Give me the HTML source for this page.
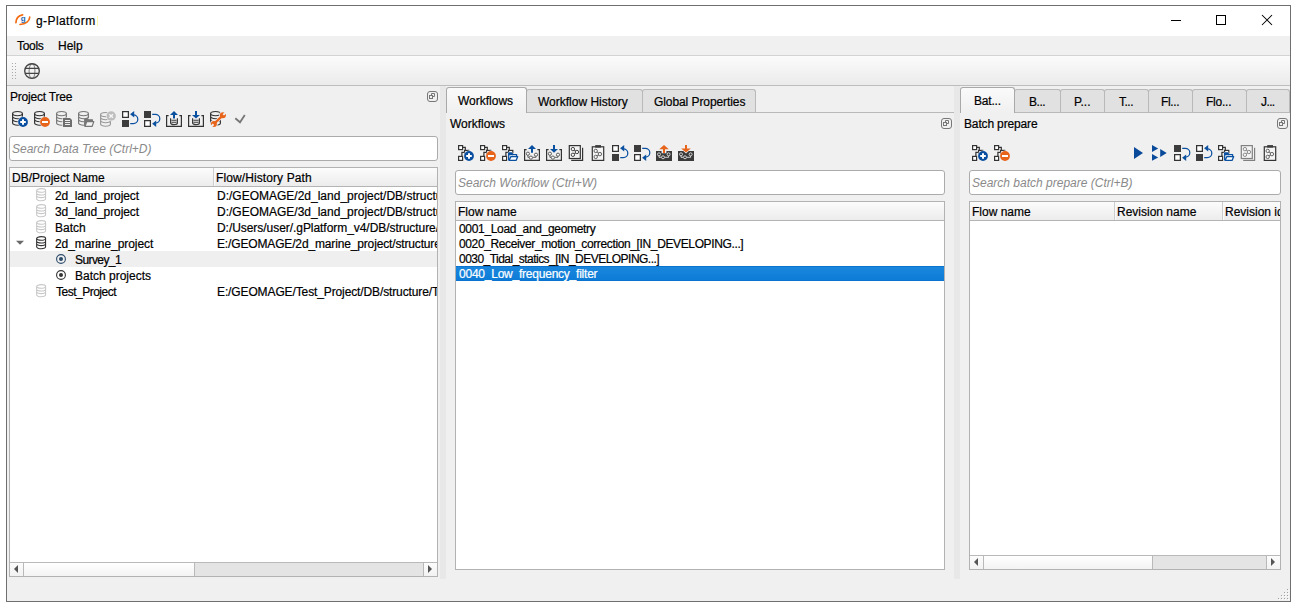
<!DOCTYPE html>
<html><head><meta charset="utf-8">
<style>
*{margin:0;padding:0;box-sizing:border-box}
html,body{width:1297px;height:609px;overflow:hidden;background:#fff;font-family:"Liberation Sans",sans-serif;font-size:12px;color:#000}
.a{position:absolute}
.t{position:absolute;white-space:nowrap;line-height:14px;height:14px;-webkit-text-stroke:0.2px currentColor}
.ph{position:absolute;white-space:nowrap;font-style:italic;color:#8a8a8a;line-height:14px}
.srch{position:absolute;background:#fff;border:1px solid #ababab;border-radius:3px}
.box{position:absolute;background:#fff;border:1px solid #b2b2b2}
.hdr{position:absolute;background:linear-gradient(#fcfcfc,#ececec);border-bottom:1px solid #b4b4b4}
.tab{position:absolute;background:#e1e1e1;border:1px solid #b9b9b9;border-bottom:none;border-radius:3px 3px 0 0}
.tabsel{position:absolute;background:linear-gradient(#fafafa,#f0f0f0);border:1px solid #a9a9a9;border-bottom:none;border-radius:3px 3px 0 0}
.flt{position:absolute;width:12px;height:12px;border:1px solid #7a7a7a;border-radius:3px}
.spl{position:absolute;background:#e8e8e8}
</style></head><body>
<!-- window border -->
<div class="a" style="left:6px;top:5px;width:1285px;height:597px;border:1px solid #707070;background:#f0f0f0"></div>
<!-- title bar -->
<div class="a" style="left:7px;top:6px;width:1283px;height:30px;background:#fff"></div>
<div class="t" style="left:36px;top:14px;letter-spacing:0.42px">g-Platform</div>
<div class="a" style="left:97px;top:16px;width:1px;height:10px;background:#fff6a8"></div>
<!-- menu -->
<div class="a" style="left:7px;top:36px;width:1283px;height:19px;background:#f0f0f0"></div>
<div class="a" style="left:7px;top:55px;width:1283px;height:1px;background:#d3d3d3"></div>
<div class="t" style="left:17px;top:39px;letter-spacing:-0.3px">Tools</div>
<div class="t" style="left:58px;top:39px">Help</div>
<!-- toolbar -->
<div class="a" style="left:7px;top:56px;width:1283px;height:29px;background:linear-gradient(#fbfbfb,#ebebeb)"></div>
<div class="a" style="left:7px;top:85px;width:1283px;height:1px;background:#bdbdbd"></div>

<!-- LEFT DOCK -->
<div class="t" style="left:10px;top:90px;letter-spacing:-0.2px">Project Tree</div>
<div class="srch" style="left:9px;top:136px;width:429px;height:25px"></div>
<div class="ph" style="left:12px;top:142px">Search Data Tree (Ctrl+D)</div>
<div class="box" style="left:9px;top:167px;width:429px;height:410px"></div>
<div class="hdr" style="left:10px;top:168px;width:427px;height:19px"></div>
<div class="a" style="left:213px;top:168px;width:1px;height:18px;background:#cdcdcd;box-shadow:1px 0 0 #fafafa"></div>
<div class="t" style="left:12px;top:171px">DB/Project Name</div>
<div class="t" style="left:216px;top:171px;letter-spacing:0.1px">Flow/History Path</div>
<div class="a" style="left:10px;top:251px;width:427px;height:16px;background:#efefef"></div>
<div class="t" style="left:55px;top:189px;letter-spacing:-0.1px">2d_land_project</div>
<div class="t" style="left:55px;top:205px;letter-spacing:-0.1px">3d_land_project</div>
<div class="t" style="left:55px;top:221px">Batch</div>
<div class="t" style="left:55px;top:237px;letter-spacing:-0.07px">2d_marine_project</div>
<div class="t" style="left:75px;top:253px;letter-spacing:-0.58px">Survey_1</div>
<div class="t" style="left:75px;top:269px">Batch projects</div>
<div class="t" style="left:56px;top:285px;letter-spacing:-0.5px">Test_Project</div>
<div class="a" style="left:217px;top:186px;width:220px;height:120px;overflow:hidden">
  <div class="t" style="left:0;top:3px">D:/GEOMAGE/2d_land_project/DB/structure/</div>
  <div class="t" style="left:0;top:19px">D:/GEOMAGE/3d_land_project/DB/structure/</div>
  <div class="t" style="left:0;top:35px;letter-spacing:-0.05px">D:/Users/user/.gPlatform_v4/DB/structure/</div>
  <div class="t" style="left:0;top:51px;letter-spacing:-0.15px">E:/GEOMAGE/2d_marine_project/structure/</div>
  <div class="t" style="left:0;top:99px;letter-spacing:-0.12px">E:/GEOMAGE/Test_Project/DB/structure/T</div>
</div>
<!-- left scrollbar -->
<div class="a" style="left:10px;top:562px;width:427px;height:14px;background:#e4e4e4;border-top:1px solid #b9b9b9"></div>
<div class="a" style="left:10px;top:563px;width:14px;height:13px;background:linear-gradient(#fcfcfc,#f2f2f2);border-right:1px solid #b9b9b9"></div>
<div class="a" style="left:24px;top:563px;width:171px;height:13px;background:linear-gradient(#ffffff,#f3f3f3);border-right:1px solid #b9b9b9"></div>
<div class="a" style="left:423px;top:563px;width:14px;height:13px;background:linear-gradient(#fcfcfc,#f2f2f2);border-left:1px solid #b9b9b9"></div>
<svg class="a" style="left:10px;top:562px" width="14" height="14"><path d="M8,3L4,7L8,11Z" fill="#555"/></svg>
<svg class="a" style="left:423px;top:562px" width="14" height="14"><path d="M5,3L9,7L5,11Z" fill="#555"/></svg>


<!-- splitter -->
<div class="spl" style="left:440px;top:86px;width:6px;height:493px"></div>

<!-- CENTER -->
<div class="a" style="left:526px;top:112px;width:428px;height:1px;background:#b9b9b9"></div>
<div class="tab" style="left:526px;top:89px;width:117px;height:23px"></div>
<div class="tab" style="left:642px;top:89px;width:114px;height:23px"></div>
<div class="tabsel" style="left:446px;top:87px;width:81px;height:26px"></div>
<div class="t" style="left:458px;top:94px">Workflows</div>
<div class="t" style="left:538px;top:95px">Workflow History</div>
<div class="t" style="left:654px;top:95px;letter-spacing:-0.08px">Global Properties</div>
<div class="t" style="left:450px;top:117px">Workflows</div>
<div class="srch" style="left:455px;top:170px;width:490px;height:25px"></div>
<div class="ph" style="left:458px;top:176px">Search Workflow (Ctrl+W)</div>
<div class="box" style="left:455px;top:201px;width:490px;height:369px"></div>
<div class="hdr" style="left:456px;top:202px;width:488px;height:19px"></div>
<div class="t" style="left:458px;top:205px">Flow name</div>
<div class="a" style="left:456px;top:266px;width:488px;height:15px;background:linear-gradient(#1a86dd,#0d7cd7);border-top:1px solid #0a72cf;border-bottom:1px solid #0a72cf"></div>
<div class="t" style="left:459px;top:222px;letter-spacing:-0.32px">0001_Load_and_geometry</div>
<div class="t" style="left:459px;top:237px;letter-spacing:-0.37px">0020_Receiver_motion_correction_[IN_DEVELOPING...]</div>
<div class="t" style="left:459px;top:252px;letter-spacing:-0.53px">0030_Tidal_statics_[IN_DEVELOPING...]</div>
<div class="t" style="left:459px;top:267px;color:#fff;letter-spacing:-0.23px">0040_Low_frequency_filter</div>

<!-- splitter 2 -->
<div class="spl" style="left:954px;top:86px;width:6px;height:493px"></div>

<!-- RIGHT -->
<div class="a" style="left:1014px;top:112px;width:276px;height:1px;background:#b9b9b9"></div>
<div class="tab" style="left:1014px;top:89px;width:47px;height:23px"></div>
<div class="tab" style="left:1060px;top:89px;width:45px;height:23px"></div>
<div class="tab" style="left:1104px;top:89px;width:45px;height:23px"></div>
<div class="tab" style="left:1148px;top:89px;width:45px;height:23px"></div>
<div class="tab" style="left:1192px;top:89px;width:55px;height:23px"></div>
<div class="tab" style="left:1246px;top:89px;width:44px;height:23px"></div>
<div class="tabsel" style="left:960px;top:87px;width:55px;height:26px"></div>
<div class="t" style="left:974px;top:94px;letter-spacing:-0.2px">Bat...</div>
<div class="t" style="left:1029px;top:95px;letter-spacing:-0.45px">B...</div>
<div class="t" style="left:1074px;top:95px">P...</div>
<div class="t" style="left:1119px;top:95px;letter-spacing:-0.5px">T...</div>
<div class="t" style="left:1161px;top:95px;letter-spacing:-0.38px">Fl...</div>
<div class="t" style="left:1206px;top:95px;letter-spacing:-0.24px">Flo...</div>
<div class="t" style="left:1261px;top:95px;letter-spacing:-0.6px">J...</div>
<div class="t" style="left:964px;top:117px;letter-spacing:-0.15px">Batch prepare</div>
<div class="srch" style="left:969px;top:170px;width:312px;height:25px"></div>
<div class="ph" style="left:972px;top:176px">Search batch prepare (Ctrl+B)</div>
<div class="box" style="left:969px;top:201px;width:312px;height:369px"></div>
<div class="hdr" style="left:970px;top:202px;width:310px;height:19px"></div>
<div class="a" style="left:1114px;top:202px;width:1px;height:18px;background:#cdcdcd;box-shadow:1px 0 0 #fafafa"></div>
<div class="a" style="left:1222px;top:202px;width:1px;height:18px;background:#cdcdcd;box-shadow:1px 0 0 #fafafa"></div>
<div class="t" style="left:972px;top:205px">Flow name</div>
<div class="a" style="left:1117px;top:202px;width:103px;height:18px;overflow:hidden"><div class="t" style="left:0;top:3px">Revision name</div></div>
<div class="a" style="left:1225px;top:202px;width:55px;height:18px;overflow:hidden"><div class="t" style="left:0;top:3px">Revision id</div></div>
<div class="a" style="left:970px;top:555px;width:310px;height:14px;background:#e4e4e4;border-top:1px solid #b9b9b9"></div>
<div class="a" style="left:970px;top:556px;width:14px;height:13px;background:linear-gradient(#fcfcfc,#f2f2f2);border-right:1px solid #b9b9b9"></div>
<div class="a" style="left:984px;top:556px;width:169px;height:13px;background:linear-gradient(#ffffff,#f3f3f3);border-right:1px solid #b9b9b9"></div>
<div class="a" style="left:1266px;top:556px;width:14px;height:13px;background:linear-gradient(#fcfcfc,#f2f2f2);border-left:1px solid #b9b9b9"></div>
<svg class="a" style="left:970px;top:555px" width="14" height="14"><path d="M8,3L4,7L8,11Z" fill="#555"/></svg>
<svg class="a" style="left:1266px;top:555px" width="14" height="14"><path d="M5,3L9,7L5,11Z" fill="#555"/></svg>
<svg class="a" style="left:1160px;top:8px" width="120" height="24"><path d="M11,12.5H21" stroke="#000" stroke-width="1"/><rect x="56.5" y="7.5" width="9" height="9" fill="none" stroke="#000" stroke-width="1"/><path d="M102,7L112,17M112,7L102,17" stroke="#000" stroke-width="1.05"/></svg>
<svg class="a" style="left:1278px;top:589px" width="12" height="12"><rect x="10" y="1" width="1" height="1" fill="#fff"/><rect x="9" y="0" width="1" height="1" fill="#a0a0a0"/><rect x="7" y="4" width="1" height="1" fill="#fff"/><rect x="6" y="3" width="1" height="1" fill="#a0a0a0"/><rect x="10" y="4" width="1" height="1" fill="#fff"/><rect x="9" y="3" width="1" height="1" fill="#a0a0a0"/><rect x="4" y="7" width="1" height="1" fill="#fff"/><rect x="3" y="6" width="1" height="1" fill="#a0a0a0"/><rect x="7" y="7" width="1" height="1" fill="#fff"/><rect x="6" y="6" width="1" height="1" fill="#a0a0a0"/><rect x="10" y="7" width="1" height="1" fill="#fff"/><rect x="9" y="6" width="1" height="1" fill="#a0a0a0"/><rect x="1" y="10" width="1" height="1" fill="#fff"/><rect x="0" y="9" width="1" height="1" fill="#a0a0a0"/><rect x="4" y="10" width="1" height="1" fill="#fff"/><rect x="3" y="9" width="1" height="1" fill="#a0a0a0"/><rect x="7" y="10" width="1" height="1" fill="#fff"/><rect x="6" y="9" width="1" height="1" fill="#a0a0a0"/><rect x="10" y="10" width="1" height="1" fill="#fff"/><rect x="9" y="9" width="1" height="1" fill="#a0a0a0"/></svg>

<svg width="0" height="0" style="position:absolute">
<defs>
 <g id="db">
  <ellipse cx="5.5" cy="2.6" rx="4.9" ry="2.1" fill="none"/>
  <path d="M0.6,2.6V12.4M10.4,2.6V12.4M0.6,5.6A4.9,2.1 0 0 0 10.4,5.6M0.6,8.6A4.9,2.1 0 0 0 10.4,8.6M0.6,12.1A4.9,2.1 0 0 0 10.4,12.1" fill="none"/>
 </g>
 <g id="flow">
  <path d="M4.6,2.3H7.3V5.4M6.6,7.3H3.9V11.4" fill="none"/>
  <rect x="0.6" y="0.6" width="4" height="4" fill="#fff"/>
  <rect x="6.6" y="5.4" width="4.2" height="4.2" fill="#fff"/>
  <rect x="0.6" y="11.4" width="4" height="4" fill="#fff"/>
 </g>
 <g id="plusc"><circle cx="11" cy="11" r="5.4" fill="#f0f0f0"/><circle cx="11" cy="11" r="4.9" fill="#0a4ea0"/><path d="M8.2,11H13.8M11,8.2V13.8" stroke="#fff" stroke-width="2"/></g>
 <g id="minusc"><circle cx="11" cy="11" r="5.4" fill="#f0f0f0"/><circle cx="11" cy="11" r="4.9" fill="#e8641b"/><path d="M8,11H14" stroke="#fff" stroke-width="2"/></g>
 <g id="folderb" stroke="#0a50a0" stroke-width="1.3" stroke-linejoin="round">
  <path d="M5.8,16.2V7.3H10L11,8.5H15.4V11H16.4L15,16.2Z" fill="#f0f0f0" stroke="none"/>
  <path d="M6.7,15.3V8.2H9.6L10.6,9.6H14.6V11.4" fill="#fff"/>
  <path d="M6.7,8.2H9.6L10.6,9.6H6.7Z" fill="#0a50a0"/>
  <path d="M7.1,15.3L8.9,11.6H15.7L14.2,15.3Z" fill="#fff"/>
 </g>
 <g id="swapup">
  <rect x="0" y="0" width="7" height="7" fill="#333"/><rect x="1.25" y="1.25" width="4.5" height="4.5" fill="#fff"/>
  <rect x="0" y="9" width="7" height="7" fill="#3c3c3c"/>
  <path d="M11.3,3.9A4.5,4.35 0 0 1 11.3,12.6H8.2" fill="none" stroke="#0a50a0" stroke-width="1.25"/>
  <path d="M8.1,3.2L12.2,0.1V6.6Z" fill="#0a50a0"/>
 </g>
 <g id="swapdn">
  <rect x="0" y="0" width="7" height="7" fill="#3c3c3c"/>
  <rect x="0" y="9" width="7" height="7" fill="#333"/><rect x="1.25" y="10.25" width="4.5" height="4.5" fill="#fff"/>
  <path d="M8.2,3.4H11.3A4.5,4.35 0 0 1 11.3,12.1" fill="none" stroke="#0a50a0" stroke-width="1.25"/>
  <path d="M8.1,12.8L12.2,9.4V15.9Z" fill="#0a50a0"/>
 </g>
 <g id="nodes" stroke="#555" stroke-width="0.95">
  <path d="M3.9,10.2V12.3H5.2M8.6,12.3H12V11.3" fill="none"/>
  <circle cx="3.9" cy="8.7" r="1.6" fill="#f8f8f8"/><circle cx="12" cy="9.7" r="1.6" fill="#f8f8f8"/><circle cx="6.9" cy="12.6" r="1.6" fill="#f8f8f8"/>
 </g>
 <g id="openbox"><path d="M2.6,4.6H0.6V15.4H15.4V4.6H13.4" fill="none" stroke="#333" stroke-width="1.2"/></g>
 <g id="upflow"><use href="#openbox"/><use href="#nodes"/><path d="M4,4.1L8,0L12,4.1H9V7.8H7V4.1Z" fill="#0a50a0"/></g>
 <g id="dnflow"><use href="#openbox"/><use href="#nodes"/><path d="M4,4.1H7V0H9V4.1H12L8,7.8Z" fill="#0a50a0"/></g>
 <g id="darknodes" fill="none" stroke="#e0e0e0" stroke-width="0.9"><path d="M3,10.8V12.3H5.5M8.5,12.3H12.6V10.8"/><circle cx="3" cy="9.3" r="1.5" fill="#3a3a3a"/><circle cx="12.6" cy="9.3" r="1.5" fill="#3a3a3a"/><circle cx="7" cy="12.3" r="1.5" fill="#3a3a3a"/></g>
 <g id="darkup"><path d="M0,6.1H5.6V8.2H10.4V6.1H16V16H0Z" fill="#3a3a3a"/><use href="#darknodes"/><path d="M3.2,4.3L8,0L12.8,4.3H9V8H7V4.3Z" fill="#e8641b"/></g>
 <g id="darkdn"><path d="M0,6.1H5.2L8,8.6L10.8,6.1H16V16H0Z" fill="#3a3a3a"/><use href="#darknodes"/><path d="M3.2,3.6H7V0H9V3.6H12.8L8,7.6Z" fill="#e8641b"/></g>
 <g id="copyflow"><path d="M3.2,15.4H14.6V2.8" fill="none" stroke-width="1.2"/><rect x="1.3" y="0.6" width="11" height="12.9" fill="#f4f4f4" stroke-width="1.2"/><g fill="#f4f4f4" stroke-width="0.9" class="nd"><path d="M4.9,4.1L8.9,7L4.9,9.8" fill="none"/><circle cx="4.9" cy="4.1" r="1.7"/><circle cx="8.9" cy="7" r="1.7"/><circle cx="4.9" cy="9.8" r="1.7"/></g></g>
 <g id="clipflow"><rect x="2.3" y="1.8" width="11.4" height="13.6" fill="#f4f4f4" stroke="#333" stroke-width="1.2"/><rect x="5.2" y="0.1" width="5.8" height="2.5" fill="#3a3a3a"/><g fill="#f4f4f4" stroke="#555" stroke-width="0.9"><path d="M5.7,5.9L9.9,9.1L5.7,11.9" fill="none"/><circle cx="5.7" cy="5.9" r="1.7"/><circle cx="9.9" cy="9.1" r="1.7"/><circle cx="5.7" cy="11.9" r="1.7"/></g></g>
 <g id="smalldb" fill="none" stroke="#3a3a3a" stroke-width="1.2"><path d="M0.6,0.6V5.4A3.4,1.6 0 0 0 7.4,5.4V0.6"/><path d="M1.4,2.7H6.6M1.4,4.6H6.6" stroke-width="1.1"/></g>
</defs>
</svg>
<!--ICONS-->
<svg class="a" style="left:12px;top:111px;overflow:visible" width="16" height="16"><use href="#db" stroke="#333" stroke-width="1.15"/><use href="#plusc"/></svg>
<svg class="a" style="left:34px;top:111px;overflow:visible" width="16" height="16"><use href="#db" stroke="#333" stroke-width="1.15"/><use href="#minusc"/></svg>
<svg class="a" style="left:56px;top:111px;overflow:visible" width="16" height="16"><use href="#db" stroke="#777" stroke-width="1.15"/><path d="M6.4,6.5H14.2L16.4,8.7V16.4H6.4Z" fill="#f0f0f0"/><path d="M7,7H14L16,9V16H7Z" fill="#6e6e6e"/><path d="M9,9.5H14M9,11.5H14M9,13.5H14" stroke="#f0f0f0" stroke-width="1"/></svg>
<svg class="a" style="left:78px;top:111px;overflow:visible" width="16" height="16"><use href="#db" stroke="#777" stroke-width="1.15"/><path d="M6.2,16V7H10.4L11.4,8.2H15V11" fill="#f0f0f0"/><path d="M6.7,15.3V7.6H9.4L10.4,8.8H14.4V11" fill="#777" stroke="#777" stroke-width="1.2" stroke-linejoin="round"/><path d="M7,15.3L8.8,10.6H15.8L14.2,15.3Z" fill="#f4f4f4" stroke="#777" stroke-width="1.2" stroke-linejoin="round"/></svg>
<svg class="a" style="left:100px;top:111px;overflow:visible" width="16" height="16"><g transform="translate(0,1)"><use href="#db" stroke="#999" stroke-width="1.15"/></g><circle cx="11.2" cy="5" r="5.3" fill="#f0f0f0"/><circle cx="11.2" cy="5" r="4.7" fill="#bdbdbd"/><path d="M9.4,3.2L13,6.8M13,3.2L9.4,6.8" stroke="#f4f4f4" stroke-width="1.5"/></svg>
<svg class="a" style="left:122px;top:111px;overflow:visible" width="16" height="16"><use href="#swapup"/></svg>
<svg class="a" style="left:144px;top:111px;overflow:visible" width="16" height="16"><use href="#swapdn"/></svg>
<svg class="a" style="left:166px;top:111px;overflow:visible" width="16" height="16"><use href="#openbox"/><g transform="translate(4,6.6)"><use href="#smalldb"/></g><path d="M4,4.1L8,0L12,4.1H9V7.4H7V4.1Z" fill="#0a50a0"/></svg>
<svg class="a" style="left:188px;top:111px;overflow:visible" width="16" height="16"><use href="#openbox"/><g transform="translate(4,6.6)"><use href="#smalldb"/></g><path d="M4,4.1H7V0H9V4.1H12L8,7.6Z" fill="#0a50a0"/></svg>
<svg class="a" style="left:210px;top:111px;overflow:visible" width="16" height="16"><use href="#db" stroke="#333" stroke-width="1.15"/><g stroke="#f0f0f0" stroke-width="1.4" fill="#f0f0f0"><path d="M4.2,12.6L12.6,4.6" stroke-width="3.8"/><circle cx="12.9" cy="4.3" r="3.1"/><circle cx="3.9" cy="12.9" r="3.1"/></g><g fill="#e8641b"><path d="M4.2,12.6L12.6,4.6" stroke="#e8641b" stroke-width="2.3"/><circle cx="12.9" cy="4.3" r="3"/><circle cx="3.9" cy="12.9" r="3"/></g><path d="M13.3,3.9L16,1.2M3.5,13.3L0.8,16" stroke="#f0f0f0" stroke-width="2"/></svg>
<svg class="a" style="left:232px;top:111px;overflow:visible" width="16" height="16"><path d="M3.3,7.2L8,11.3L12.8,4" fill="none" stroke="#777" stroke-width="1.8"/></svg>
<svg class="a" style="left:24px;top:63px;overflow:visible" width="16" height="16"><g fill="none"><ellipse cx="8" cy="8" rx="2.9" ry="7.2" stroke="#8a8a8a" stroke-width="1.1"/><circle cx="8" cy="8" r="7.3" stroke="#444" stroke-width="1.35"/><path d="M1,5.4H15M1,10.4H15" stroke="#444" stroke-width="1.2"/></g></svg>
<svg class="a" style="left:12px;top:63px;overflow:visible" width="16" height="16"><rect x="0" y="0" width="1" height="1" fill="#a8a8a8"/><rect x="0" y="3" width="1" height="1" fill="#a8a8a8"/><rect x="0" y="6" width="1" height="1" fill="#a8a8a8"/><rect x="0" y="9" width="1" height="1" fill="#a8a8a8"/><rect x="0" y="12" width="1" height="1" fill="#a8a8a8"/><rect x="0" y="15" width="1" height="1" fill="#a8a8a8"/><rect x="3" y="0" width="1" height="1" fill="#a8a8a8"/><rect x="3" y="3" width="1" height="1" fill="#a8a8a8"/><rect x="3" y="6" width="1" height="1" fill="#a8a8a8"/><rect x="3" y="9" width="1" height="1" fill="#a8a8a8"/><rect x="3" y="12" width="1" height="1" fill="#a8a8a8"/><rect x="3" y="15" width="1" height="1" fill="#a8a8a8"/></svg>
<svg class="a" style="left:14px;top:12px;overflow:visible" width="18" height="16"><path d="M1.9,10.6C2.1,6.8 4.4,3.6 8.6,2.9" fill="none" stroke="#f36c12" stroke-width="1.7" stroke-linecap="round"/><path d="M15.7,5.2C15.5,9 12,12.3 6,12.5" fill="none" stroke="#f36c12" stroke-width="1.7" stroke-linecap="round"/><text x="6.8" y="9.3" font-family="Liberation Sans" font-weight="bold" font-size="8" fill="#1e66b4">g</text></svg>
<svg class="a" style="left:458px;top:145px;overflow:visible" width="16" height="16"><use href="#flow" stroke="#333" stroke-width="1.2"/><use href="#plusc"/></svg>
<svg class="a" style="left:480px;top:145px;overflow:visible" width="16" height="16"><use href="#flow" stroke="#333" stroke-width="1.2"/><use href="#minusc"/></svg>
<svg class="a" style="left:502px;top:145px;overflow:visible" width="16" height="16"><use href="#flow" stroke="#333" stroke-width="1.2"/><use href="#folderb"/></svg>
<svg class="a" style="left:524px;top:145px;overflow:visible" width="16" height="16"><use href="#upflow"/></svg>
<svg class="a" style="left:546px;top:145px;overflow:visible" width="16" height="16"><use href="#dnflow"/></svg>
<svg class="a" style="left:568px;top:145px;overflow:visible" width="16" height="16"><use href="#copyflow" stroke="#333"/></svg>
<svg class="a" style="left:590px;top:145px;overflow:visible" width="16" height="16"><use href="#clipflow"/></svg>
<svg class="a" style="left:612px;top:145px;overflow:visible" width="16" height="16"><use href="#swapup"/></svg>
<svg class="a" style="left:634px;top:145px;overflow:visible" width="16" height="16"><use href="#swapdn"/></svg>
<svg class="a" style="left:656px;top:145px;overflow:visible" width="16" height="16"><use href="#darkup"/></svg>
<svg class="a" style="left:678px;top:145px;overflow:visible" width="16" height="16"><use href="#darkdn"/></svg>
<svg class="a" style="left:972px;top:145px;overflow:visible" width="16" height="16"><use href="#flow" stroke="#333" stroke-width="1.2"/><use href="#plusc"/></svg>
<svg class="a" style="left:994px;top:145px;overflow:visible" width="16" height="16"><use href="#flow" stroke="#333" stroke-width="1.2"/><use href="#minusc"/></svg>
<svg class="a" style="left:1130px;top:145px;overflow:visible" width="16" height="16"><path d="M4,2L13,8L4,14Z" fill="#0a4a9a"/></svg>
<svg class="a" style="left:1152px;top:145px;overflow:visible" width="16" height="16"><path d="M0,0L6.2,3.5L0,7Z M0,9L6.2,12.4L0,15.8Z M8.2,3.9L14.7,8L8.2,12.1Z" fill="#0a4a9a"/></svg>
<svg class="a" style="left:1174px;top:145px;overflow:visible" width="16" height="16"><use href="#swapdn"/></svg>
<svg class="a" style="left:1196px;top:145px;overflow:visible" width="16" height="16"><use href="#swapup"/></svg>
<svg class="a" style="left:1218px;top:145px;overflow:visible" width="16" height="16"><use href="#flow" stroke="#333" stroke-width="1.2"/><use href="#folderb"/></svg>
<svg class="a" style="left:1240px;top:145px;overflow:visible" width="16" height="16"><use href="#copyflow" stroke="#808080"/></svg>
<svg class="a" style="left:1262px;top:145px;overflow:visible" width="16" height="16"><use href="#clipflow"/></svg>
<svg class="a" style="left:36px;top:188px;overflow:visible" width="16" height="16"><g transform="translate(0.1,0.2) scale(0.91,0.88)"><use href="#db" stroke="#c8c8c8" stroke-width="1.2"/></g></svg>
<svg class="a" style="left:36px;top:204px;overflow:visible" width="16" height="16"><g transform="translate(0.1,0.2) scale(0.91,0.88)"><use href="#db" stroke="#c8c8c8" stroke-width="1.2"/></g></svg>
<svg class="a" style="left:36px;top:220px;overflow:visible" width="16" height="16"><g transform="translate(0.1,0.2) scale(0.91,0.88)"><use href="#db" stroke="#c8c8c8" stroke-width="1.2"/></g></svg>
<svg class="a" style="left:36px;top:236px;overflow:visible" width="16" height="16"><g transform="translate(0.1,0.2) scale(0.91,0.88)"><use href="#db" stroke="#333" stroke-width="1.2"/></g></svg>
<svg class="a" style="left:36px;top:284px;overflow:visible" width="16" height="16"><g transform="translate(0.1,0.2) scale(0.91,0.88)"><use href="#db" stroke="#c8c8c8" stroke-width="1.2"/></g></svg>
<svg class="a" style="left:16px;top:240px;overflow:visible" width="16" height="16"><path d="M0,0.8H8L4,4.8Z" fill="#6a6a6a"/></svg>
<svg class="a" style="left:56px;top:254px;overflow:visible" width="16" height="16"><circle cx="5" cy="5" r="4.4" fill="none" stroke="#2a4a6a" stroke-width="1.1"/><circle cx="5" cy="5" r="2" fill="#2a4a6a"/></svg>
<svg class="a" style="left:56px;top:270px;overflow:visible" width="16" height="16"><circle cx="5" cy="5" r="4.4" fill="none" stroke="#333" stroke-width="1.1"/><circle cx="5" cy="5" r="2" fill="#333"/></svg>
<svg class="a" style="left:427px;top:91px;overflow:visible" width="12" height="12"><rect x="0.5" y="0.5" width="10" height="10" rx="2.5" fill="none" stroke="#777"/><rect x="2.5" y="4.5" width="3" height="3" fill="none" stroke="#777"/><path d="M4.5,4.5V2.5H7.5V5.5H5.5" fill="none" stroke="#777"/></svg>
<svg class="a" style="left:941px;top:118px;overflow:visible" width="12" height="12"><rect x="0.5" y="0.5" width="10" height="10" rx="2.5" fill="none" stroke="#777"/><rect x="2.5" y="4.5" width="3" height="3" fill="none" stroke="#777"/><path d="M4.5,4.5V2.5H7.5V5.5H5.5" fill="none" stroke="#777"/></svg>
<svg class="a" style="left:1277px;top:118px;overflow:visible" width="12" height="12"><rect x="0.5" y="0.5" width="10" height="10" rx="2.5" fill="none" stroke="#777"/><rect x="2.5" y="4.5" width="3" height="3" fill="none" stroke="#777"/><path d="M4.5,4.5V2.5H7.5V5.5H5.5" fill="none" stroke="#777"/></svg>
<!--/ICONS-->
</body></html>
